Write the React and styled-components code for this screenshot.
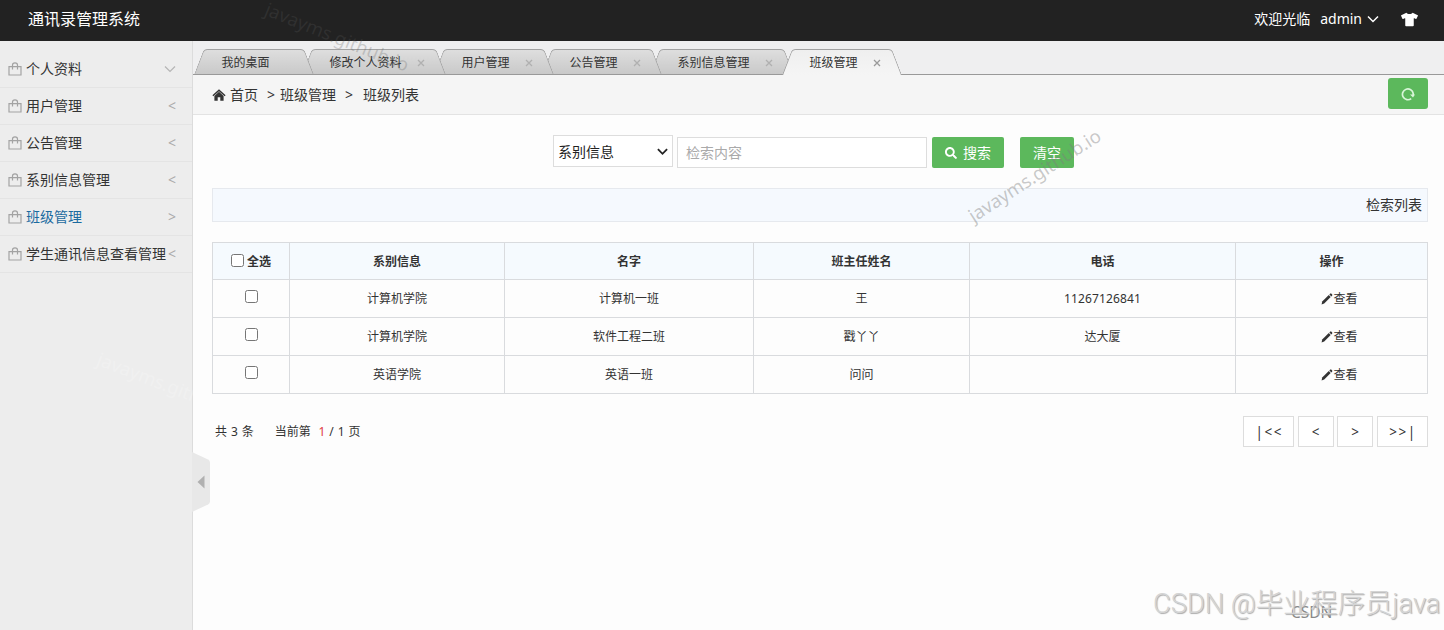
import styled, { createGlobalStyle, css } from 'styled-components';
import { FaSearch, FaTshirt } from 'react-icons/fa';

const menus = [
  { label: '个人资料', arrow: 'down' },
  { label: '用户管理', arrow: '<' },
  { label: '公告管理', arrow: '<' },
  { label: '系别信息管理', arrow: '<' },
  { label: '班级管理', arrow: '>', active: true },
  { label: '学生通讯信息查看管理', arrow: '<' },
];

const tabs = [
  { label: '我的桌面', width: 120, fixed: true },
  { label: '修改个人资料', width: 144 },
  { label: '用户管理', width: 120 },
  { label: '公告管理', width: 120 },
  { label: '系别信息管理', width: 144 },
  { label: '班级管理', width: 120, active: true },
];

const rows = [
  ['计算机学院', '计算机一班', '王', '11267126841'],
  ['计算机学院', '软件工程二班', '戳丫丫', '达大厦'],
  ['英语学院', '英语一班', '问问', ''],
];

const BagIcon = () => (
  <svg width="14" height="14" viewBox="0 0 14 14" fill="none" stroke="#a3a3a3" strokeWidth="1.200">
    <path d="M1 4.600h12v8.400H1z" />
    <path d="M4.500 7.500V3a2.500 2.200 0 0 1 5 0V7.500" />
  </svg>
);

const HomeIcon = () => (
  <svg width="14" height="12" viewBox="0 0 14 12" fill="#333">
    <path d="M7 .3L13.600 6.300l-1 1L7 2.300 1.400 7.300l-1-1z" />
    <path d="M7 2.700l4.600 4.300v4.700H8.300V8.300H5.700v3.400H2.400V7z" />
  </svg>
);

const Chevron = ({ size, color, weight }) => (
  <svg width={size} height={size} viewBox="0 0 12 12" fill="none" stroke={color} strokeWidth={weight}>
    <path d="M1 3.500l5 5 5-5" />
  </svg>
);

const RefreshIcon = () => (
  <svg width="14" height="14" viewBox="0 0 14 14" fill="none" stroke="#d9f5d9" strokeWidth="1.700">
    <path d="M10.200 11.600A5.400 5.400 0 1 1 12.200 6.500V8" />
    <path d="M9 7.600h5l-2 3z" fill="#d9f5d9" stroke="none" />
  </svg>
);

const PencilIcon = () => (
  <svg width="12" height="12" viewBox="0 0 12 12" fill="#333">
    <path d="M.6 11.400l.6-2.800L7.800 2l1.900 1.900-6.500 6.600z" />
    <path d="M8.400 1.400l.8-.8q.5-.4 1 0l1 1q.4.500 0 1l-.8.800z" />
  </svg>
);

export default function App() {
  return (
    <Page>
      <GlobalStyle />
      <Header>
        <Logo>通讯录管理系统</Logo>
        <UserBar>
          <span>欢迎光临</span>
          <span>admin</span>
          <Chevron size={12} color="#fff" weight={1.5} />
          <FaTshirt className="skin" size={17} />
        </UserBar>
      </Header>
      <Body>
        <Sidebar>
          {menus.map((menu) => (
            <MenuItem key={menu.label} $active={menu.active}>
              <BagIcon />
              <span className="label">{menu.label}</span>
              <span className="arrow">
                {menu.arrow === 'down' ? (
                  <Chevron size={12} color="#b5b5b5" weight={1.2} />
                ) : (
                  menu.arrow
                )}
              </span>
            </MenuItem>
          ))}
          <Collapse>
            <svg width="18" height="60" viewBox="0 0 18 60">
              <path d="M0 0l16 7.500q2 1 2 3v39q0 2-2 3L0 60z" fill="#e8e8e8" />
              <path d="M5.500 30l7-6.500v13z" fill="#b0b0b0" />
            </svg>
          </Collapse>
        </Sidebar>
        <Main>
          <TabBar>
            {tabs.map((tab, i) => (
              <Tab
                key={tab.label}
                $width={tab.width}
                $active={tab.active}
                $order={tab.active ? 10 : tabs.length - i}
              >
                <span>{tab.label}</span>
                {!tab.fixed && (
                  <svg width="8" height="8" viewBox="0 0 8 8" stroke={tab.active ? '#999' : '#b0b0b0'}>
                    <path d="M1 1l6 6M7 1L1 7" strokeWidth="1.300" />
                  </svg>
                )}
              </Tab>
            ))}
          </TabBar>
          <Crumbs>
            <HomeIcon />
            <span className="home">首页</span>
            <span className="gt">&gt;</span>
            <span>班级管理</span>
            <span className="gt wide">&gt;</span>
            <span>班级列表</span>
            <RefreshButton>
              <RefreshIcon />
            </RefreshButton>
          </Crumbs>
          <Content>
            <SearchBar>
              <SelectBox>
                系别信息
                <Chevron size={11} color="#222" weight={2} />
              </SelectBox>
              <SearchInput placeholder="检索内容" />
              <GreenButton $width={72}>
                <FaSearch size={12} />
                搜索
              </GreenButton>
              <GreenButton $width={54} $gap={16}>
                清空
              </GreenButton>
            </SearchBar>
            <ListBar>检索列表</ListBar>
            <Table>
              <colgroup>
                <col width="77" />
                <col width="215" />
                <col width="249" />
                <col width="216" />
                <col width="266" />
                <col width="192" />
              </colgroup>
              <thead>
                <tr>
                  <th>
                    <label>
                      <input type="checkbox" />
                      全选
                    </label>
                  </th>
                  <th>系别信息</th>
                  <th>名字</th>
                  <th>班主任姓名</th>
                  <th>电话</th>
                  <th>操作</th>
                </tr>
              </thead>
              <tbody>
                {rows.map((row) => (
                  <tr key={row[1]}>
                    <td>
                      <input type="checkbox" />
                    </td>
                    {row.map((cell, i) => (
                      <td key={i} className={/^\d+$/.test(cell) ? 'number' : undefined}>
                        {cell}
                      </td>
                    ))}
                    <td>
                      <ViewLink>
                        <PencilIcon />
                        查看
                      </ViewLink>
                    </td>
                  </tr>
                ))}
              </tbody>
            </Table>
            <Footer>
              <Summary>
                <span>共 3 条</span>
                <span>
                  当前第&nbsp; <em>1</em> / 1 页
                </span>
              </Summary>
              <Pager>
                <PageButton $width={51}>|&lt;&lt;</PageButton>
                <PageButton $width={36}>&lt;</PageButton>
                <PageButton $width={36}>&gt;</PageButton>
                <PageButton $width={51}>&gt;&gt;|</PageButton>
              </Pager>
            </Footer>
          </Content>
        </Main>
      </Body>
      <Watermark $x={970} $y={205} $angle={-33} $color="rgba(125,125,125,0.42)">
        javayms.github.io
      </Watermark>
      <Watermark $x={266} $y={-4} $angle={22} $color="rgba(90,90,90,0.25)">
        javayms.github.io
      </Watermark>
      <Watermark $x={98} $y={346} $angle={21} $color="rgba(255,255,255,0.22)">
        javayms.github.io
      </Watermark>
      <SmallMark>CSDN</SmallMark>
      <AuthorMark>CSDN @毕业程序员java</AuthorMark>
    </Page>
  );
}

const GlobalStyle = createGlobalStyle`
  * {
    box-sizing: border-box;
  }
  body {
    margin: 0;
    overflow: hidden;
    font-family: 'Noto Sans', 'Noto Sans CJK SC', sans-serif;
    font-size: 14px;
    line-height: 20px;
    color: #333;
  }
  svg {
    display: block;
    flex: none;
  }
`;

const Page = styled.div`
  position: relative;
  display: flex;
  flex-direction: column;
  width: 1444px;
  height: 630px;
  overflow: hidden;
  background: #fdfdfd;
`;

const Header = styled.header`
  display: flex;
  justify-content: space-between;
  height: 41px;
  padding: 0 26px 3px 28px;
  align-items: center;
  background: #222;
  color: #fff;
`;

const Logo = styled.div`
  font-size: 16px;
`;

const UserBar = styled.div`
  display: flex;
  align-items: center;
  svg {
    margin-left: 5px;
  }
  span + span {
    margin-left: 10px;
  }
  .skin {
    margin-left: 22px;
  }
`;

const Body = styled.div`
  display: flex;
  flex: 1;
`;

const Sidebar = styled.aside`
  position: relative;
  width: 193px;
  padding-top: 10px;
  background: #ededed;
  border-right: 1px solid #dcdcdc;
`;

const MenuItem = styled.div`
  display: flex;
  align-items: center;
  height: 37px;
  padding: 0 16px 0 8px;
  border-bottom: 1px solid #e4e4e4;
  white-space: nowrap;
  color: ${(props) => (props.$active ? '#1b6a9f' : '#333')};
  .label {
    flex: 1;
    margin-left: 4px;
  }
  .arrow {
    color: #aaa;
  }
`;

const Collapse = styled.div`
  position: absolute;
  left: 192px;
  top: 411px;
  z-index: 2;
`;

const Main = styled.main`
  flex: 1;
  display: flex;
  flex-direction: column;
`;

const TabBar = styled.div`
  display: flex;
  height: 34px;
  padding: 8px 0 0 1px;
  background: #efeff0;
  border-bottom: 1px solid #999;
`;

const tabSide = css`
  content: '';
  position: absolute;
  z-index: -1;
  top: 0;
  bottom: 0;
  border-top: 1px solid #a2a2a2;
  background: ${(props) =>
    props.$active ? 'linear-gradient(#efefef, #f5f5f5)' : 'linear-gradient(#dedede, #c9c9c9)'};
`;

const Tab = styled.div`
  position: relative;
  z-index: ${(props) => props.$order};
  display: flex;
  align-items: center;
  justify-content: space-between;
  width: ${(props) => props.$width}px;
  height: ${(props) => (props.$active ? 26 : 25)}px;
  margin-right: -12px;
  padding: ${(props) => (props.$active ? 1 : 2)}px 21px 0 27.5px;
  font-size: 12px;
  &::before {
    ${tabSide}
    left: 5px;
    right: 40%;
    border-left: 1px solid #a2a2a2;
    border-top-left-radius: 4px;
    transform: skewX(-21deg);
  }
  &::after {
    ${tabSide}
    left: 40%;
    right: 5px;
    border-right: 1px solid #a2a2a2;
    border-top-right-radius: 4px;
    transform: skewX(21deg);
  }
`;

const Crumbs = styled.nav`
  display: flex;
  align-items: center;
  height: 40px;
  padding: 0 16px 0 19px;
  background: #f5f5f5;
  border-bottom: 1px solid #e3e3e3;
  .home {
    margin-left: 4px;
  }
  .gt {
    margin: 0 5px 0 9px;
  }
  .wide {
    margin-right: 10px;
  }
`;

const RefreshButton = styled.button`
  display: flex;
  align-items: center;
  justify-content: center;
  width: 40px;
  height: 31px;
  margin: -2px 0 0 auto;
  border: 0;
  border-radius: 3px;
  background: #5cb85c;
`;

const Content = styled.div`
  padding: 20px 16px 0 19px;
`;

const SearchBar = styled.div`
  display: flex;
  height: 33px;
  padding-left: 341px;
`;

const SelectBox = styled.div`
  display: flex;
  align-items: center;
  justify-content: space-between;
  width: 120px;
  height: 32px;
  padding: 1px 4px 0 4px;
  border: 1px solid #ddd;
  background: #fff;
  color: #222;
`;

const SearchInput = styled.input`
  width: 250px;
  height: 31px;
  margin: 2px 5px 0 4px;
  padding: 0 8px;
  border: 1px solid #ddd;
  background: #fff;
  font: inherit;
  &::placeholder {
    color: #aaa;
  }
`;

const GreenButton = styled.button`
  display: flex;
  align-items: center;
  justify-content: center;
  gap: 6px;
  width: ${(props) => props.$width}px;
  height: 31px;
  margin: 2px 0 0 ${(props) => props.$gap || 0}px;
  padding: 0;
  border: 0;
  border-radius: 2px;
  background: #5cb85c;
  font: inherit;
  color: #fff;
`;

const ListBar = styled.div`
  height: 34px;
  margin-top: 20px;
  padding: 0 5px;
  border: 1px solid #e6e9ee;
  background: #f5f9fe;
  line-height: 32px;
  text-align: right;
`;

const Table = styled.table`
  width: 1216px;
  margin-top: 20px;
  table-layout: fixed;
  border-collapse: collapse;
  font-size: 12px;
  text-align: center;
  th,
  td {
    height: 38px;
    padding: 0;
    border: 1px solid #d9dbde;
  }
  th {
    height: 37px;
    padding-top: 2px;
    background: #f5fafe;
    font-weight: 600;
  }
  label {
    display: flex;
    align-items: center;
    justify-content: center;
    gap: 3px;
  }
  input {
    display: block;
    width: 13px;
    height: 13px;
    margin: 0;
  }
  th input {
    margin-top: -3px;
  }
  td input {
    margin: -4px auto 0;
  }
  .number {
    letter-spacing: 0.15px;
  }
`;

const ViewLink = styled.a`
  display: flex;
  align-items: center;
  justify-content: center;
  padding-left: 16px;
`;

const Footer = styled.div`
  display: flex;
  justify-content: space-between;
  align-items: center;
  height: 31px;
  margin-top: 22px;
  font-size: 12px;
`;

const Summary = styled.div`
  display: flex;
  gap: 21px;
  padding-left: 3px;
  word-spacing: 0.8px;
  em {
    font-style: normal;
    color: #e03c3c;
  }
`;

const Pager = styled.div`
  display: flex;
  gap: 3.6px;
`;

const PageButton = styled.button`
  width: ${(props) => props.$width}px;
  height: 31px;
  padding: 1px 0 0 1px;
  border: 1px solid #ddd;
  background: #fff;
  font: inherit;
  font-size: 13.5px;
  letter-spacing: 1.5px;
  color: #333;
`;

const Watermark = styled.div`
  position: absolute;
  z-index: 20;
  left: ${(props) => props.$x}px;
  top: ${(props) => props.$y}px;
  transform: rotate(${(props) => props.$angle}deg);
  transform-origin: 0 50%;
  font-size: 18.5px;
  line-height: 24px;
  white-space: nowrap;
  color: ${(props) => props.$color};
  pointer-events: none;
`;

const SmallMark = styled.div`
  position: absolute;
  left: 1291px;
  top: 602px;
  font-size: 15.5px;
  color: #888;
`;

const AuthorMark = styled.div`
  position: absolute;
  left: 1153px;
  top: 588px;
  font-family: Roboto, 'Noto Sans CJK SC', sans-serif;
  font-size: 27.3px;
  font-weight: 300;
  line-height: 32px;
  white-space: nowrap;
  color: #d4d4d4;
  text-shadow: 1px 1px 1px #aaa;
`;
